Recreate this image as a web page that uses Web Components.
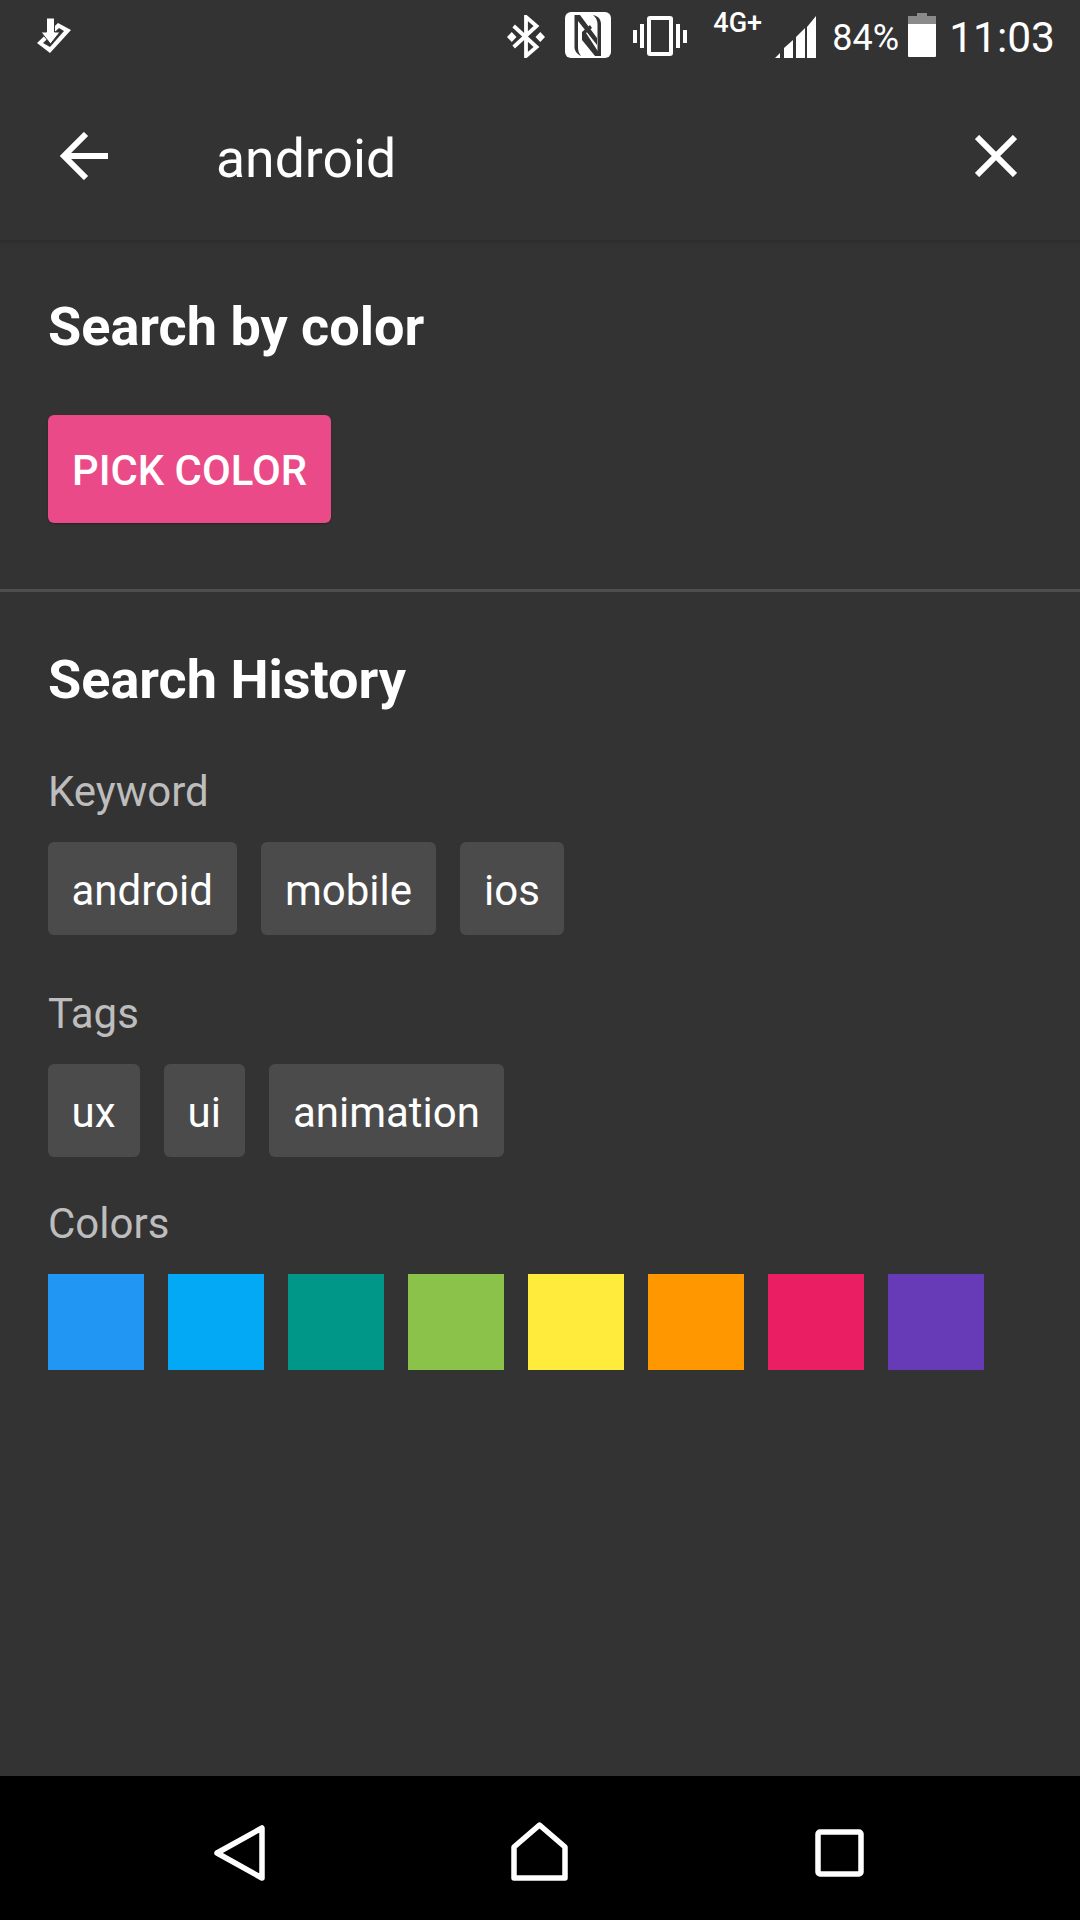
<!DOCTYPE html>
<html>
<head>
<meta charset="utf-8">
<title>Search</title>
<style>
  html, body { margin: 0; height: 100%; background: #333; }
  body { width: 1080px; height: 1920px; overflow: hidden; display: flex; flex-direction: column; font-family: Roboto, "Liberation Sans", sans-serif; color: #fff; }
  search-panel { flex: 1; }
</style>
</head>
<body>
  <search-header query="android"></search-header>
  <search-panel>
    <panel-section heading="Search by color" style="--pad-top:55px;--pad-bottom:66px;--heading-gap:56px">
      <pick-button>PICK COLOR</pick-button>
    </panel-section>
    <panel-section heading="Search History" style="--pad-top:56px;--border:none;--heading-gap:0px">
      <chip-group label="Keyword" style="--label-top:55px">
        <search-chip>android</search-chip>
        <search-chip>mobile</search-chip>
        <search-chip>ios</search-chip>
      </chip-group>
      <chip-group label="Tags" style="--label-top:54px">
        <search-chip>ux</search-chip>
        <search-chip>ui</search-chip>
        <search-chip>animation</search-chip>
      </chip-group>
      <chip-group label="Colors" style="--label-top:42px;--row-top:25px">
        <color-swatch color="#2196f3"></color-swatch>
        <color-swatch color="#03a9f4"></color-swatch>
        <color-swatch color="#009688"></color-swatch>
        <color-swatch color="#8bc34a"></color-swatch>
        <color-swatch color="#ffeb3b"></color-swatch>
        <color-swatch color="#ff9800"></color-swatch>
        <color-swatch color="#e91e63"></color-swatch>
        <color-swatch color="#673ab7"></color-swatch>
      </chip-group>
    </panel-section>
  </search-panel>
  <nav-bar></nav-bar>

<script>
class StatusBar extends HTMLElement {
  constructor() {
    super();
    this.shadowDOM = this.attachShadow({mode: 'open'});
  }

  connectedCallback() {
    this.shadowDOM.innerHTML = `
      <style>
        :host { display: flex; align-items: flex-start; height: 72px; padding: 0 25px 0 37px; color: #fff; font-family: Roboto, sans-serif; }
        svg { display: block; flex: none; fill: #fff; }
        .right { margin-left: auto; display: flex; align-items: flex-start; }
        .net { font-size: 27px; font-weight: 500; line-height: 20px; margin: 13px 12px 0 26px; width: 50px; white-space: nowrap; }
        .pct { font-size: 36px; line-height: 40px; margin: 18px 9px 0 16px; }
        .time { font-size: 42.500px; line-height: 50px; margin: 13px 0 0 13px; }
      </style>
      <svg width="34" height="35" viewBox="0 0 34 35" style="margin-top:18px">
        <path d="M0 25L21 5l13 7-21 23zM6 25l7 4 14-16-5-3z" fill-rule="evenodd"/>
        <path d="M9.500 0h8v14h5.500l-9.500 12L4 14h5.500z" stroke="#333" stroke-width="1"/>
      </svg>
      <div class="right">
        <svg width="38" height="43" viewBox="0 0 40 43" preserveAspectRatio="none" style="margin-top:15px">
          <path d="M7 11l24 21-11 9V2l11 9L7 32" fill="none" stroke="#fff" stroke-width="4"/>
          <path d="M5 17l5 5-5 5-5-5zM35 17l5 5-5 5-5-5z"/>
        </svg>
        <svg width="46" height="46" viewBox="0 0 46 46" style="margin:12px 0 0 20px">
          <rect width="46" height="46" rx="6"/>
          <g fill="#333">
            <path d="M9.500 3H15l17 23v7L13 9v26c0 4 1 6 3 9-4-2-6.500-5-6.500-9z"/>
            <path d="M17 20l8-7 2 3-6 5 15 23h-6L17 28z"/>
            <path d="M28 3c5 1 8 4 8 9v32h-3.500V12c0-4-2-7-4.500-9z"/>
          </g>
        </svg>
        <svg width="54" height="40" viewBox="0 0 54 40" style="margin:16px 0 0 22px">
          <path d="M17 0h20a3 3 0 0 1 3 3v34a3 3 0 0 1-3 3H17a3 3 0 0 1-3-3V3a3 3 0 0 1 3-3zM18 4v32h18V4z" fill-rule="evenodd"/>
          <rect y="14" width="4" height="13"/><rect x="7" y="8" width="4" height="24"/>
          <rect x="43" y="8" width="4" height="24"/><rect x="50" y="14" width="4" height="13"/>
        </svg>
        <span class="net">4G+</span>
        <svg width="41" height="42" viewBox="0 0 41 42" style="margin-top:16px">
          <path d="M0 42l5-5v5zM9 42V32l9-8v18zM21 42V21l9-9v30zM32 42V11L41 0v42z"/>
        </svg>
        <span class="pct">84%</span>
        <svg width="28" height="44" viewBox="0 0 28 44" style="margin-top:13px">
          <path d="M9 0h10v3h9v8H0V3h9z" fill="#8a8a8a"/>
          <path d="M0 11h28v32a1 1 0 0 1-1 1H1a1 1 0 0 1-1-1z"/>
        </svg>
        <span class="time">11:03</span>
      </div>
    `;
  }
}

class SearchHeader extends HTMLElement {
  constructor() {
    super();
    this.shadowDOM = this.attachShadow({mode: 'open'});
  }

  connectedCallback() {
    this.shadowDOM.innerHTML = `
      <style>
        :host { display: block; background: #333; box-shadow: 0 2px 4px rgba(0,0,0,.15); position: relative; z-index: 1; font-family: Roboto, sans-serif; }
        .bar { display: flex; align-items: center; height: 168px; padding: 0 63px 0 60px; }
        .query { flex: 1; font-size: 53.500px; line-height: 64px; color: #fff; margin: 5px 0 0 108px; }
        svg { display: block; flex: none; fill: none; stroke: #fff; stroke-width: 6; }
      </style>
      <status-bar></status-bar>
      <div class="bar">
        <svg width="48" height="48" viewBox="0 0 48 48"><path d="M48 24H4M26 2L4 24l22 22"/></svg>
        <span class="query">${this.getAttribute('query')}</span>
        <svg width="42" height="42" viewBox="0 0 42 42"><path d="M2 2l38 38M40 2L2 40"/></svg>
      </div>
    `;
  }
}

class PanelSection extends HTMLElement {
  constructor() {
    super();
    this.shadowDOM = this.attachShadow({mode: 'open'});
  }

  connectedCallback() {
    this.shadowDOM.innerHTML = `
      <style>
        :host { display: block; padding: var(--pad-top) 48px var(--pad-bottom, 0); border-bottom: var(--border, 3px solid #4e4e4e); font-family: Roboto, sans-serif; }
        h2 { margin: 0 0 var(--heading-gap); font-size: 54px; line-height: 64px; font-weight: 700; color: #fff; }
      </style>
      <h2>${this.getAttribute('heading')}</h2>
      <slot></slot>
    `;
  }
}

class PickButton extends HTMLElement {
  constructor() {
    super();
    this.shadowDOM = this.attachShadow({mode: 'open'});
    this.shadowDOM.innerHTML = `
      <style>
        :host { display: flex; width: fit-content; box-sizing: border-box; align-items: center; height: 108px; padding: 2px 24px 0; background: #ea4a88; border-radius: 6px; box-shadow: 0 1px 2px rgba(0,0,0,.3); color: #fff; font: 500 41.800px Roboto, sans-serif; }
      </style>
      <slot></slot>
    `;
  }
}

class ChipGroup extends HTMLElement {
  constructor() {
    super();
    this.shadowDOM = this.attachShadow({mode: 'open'});
  }

  connectedCallback() {
    this.shadowDOM.innerHTML = `
      <style>
        :host { display: block; font-family: Roboto, sans-serif; }
        .label { margin-top: var(--label-top); font-size: 42px; line-height: 50px; color: #bdbdbd; }
        .row { display: flex; flex-wrap: wrap; gap: 24px; margin-top: var(--row-top, 25px); }
      </style>
      <div class="label">${this.getAttribute('label')}</div>
      <div class="row"><slot></slot></div>
    `;
  }
}

class SearchChip extends HTMLElement {
  constructor() {
    super();
    this.shadowDOM = this.attachShadow({mode: 'open'});
    this.shadowDOM.innerHTML = `
      <style>
        :host { display: flex; box-sizing: border-box; align-items: center; height: 93px; padding: 4px 24.500px 0 23.500px; background: #4b4b4b; border-radius: 6px; color: #fff; font: 42px Roboto, sans-serif; }
      </style>
      <slot></slot>
    `;
  }
}

class ColorSwatch extends HTMLElement {
  constructor() {
    super();
    this.shadowDOM = this.attachShadow({mode: 'open'});
  }

  connectedCallback() {
    this.shadowDOM.innerHTML = `
      <style>
        :host { display: block; width: 96px; height: 96px; background: ${this.getAttribute('color')}; }
      </style>
    `;
  }
}

class NavBar extends HTMLElement {
  constructor() {
    super();
    this.shadowDOM = this.attachShadow({mode: 'open'});
    this.shadowDOM.innerHTML = `
      <style>
        :host { display: flex; align-items: flex-start; gap: 247px; height: 144px; background: #000; padding-left: 214px; }
        svg { display: block; flex: none; fill: none; stroke: #fff; stroke-width: 5.500; stroke-linejoin: round; }
      </style>
      <svg width="51" height="56" viewBox="0 0 51 56" style="margin-top:49px"><path d="M48 3v50L3 28z"/></svg>
      <svg width="57" height="59" viewBox="0 0 57 59" style="margin:46px 0 0 -1px"><path d="M3 56V25L28.500 3 54 25v31z"/></svg>
      <svg width="49" height="48" viewBox="0 0 49 48" style="margin-top:53px"><rect x="3" y="3" width="43" height="42" rx="2"/></svg>
    `;
  }
}

class SearchPanel extends HTMLElement {
  constructor() {
    super();
    this.shadowDOM = this.attachShadow({mode: 'open'});
    this.shadowDOM.innerHTML = `
      <style>
        :host { display: block; background: #333; }
      </style>
      <slot></slot>
    `;
  }
}

customElements.define('status-bar', StatusBar);
customElements.define('search-header', SearchHeader);
customElements.define('search-panel', SearchPanel);
customElements.define('panel-section', PanelSection);
customElements.define('pick-button', PickButton);
customElements.define('chip-group', ChipGroup);
customElements.define('search-chip', SearchChip);
customElements.define('color-swatch', ColorSwatch);
customElements.define('nav-bar', NavBar);
</script>
</body>
</html>
